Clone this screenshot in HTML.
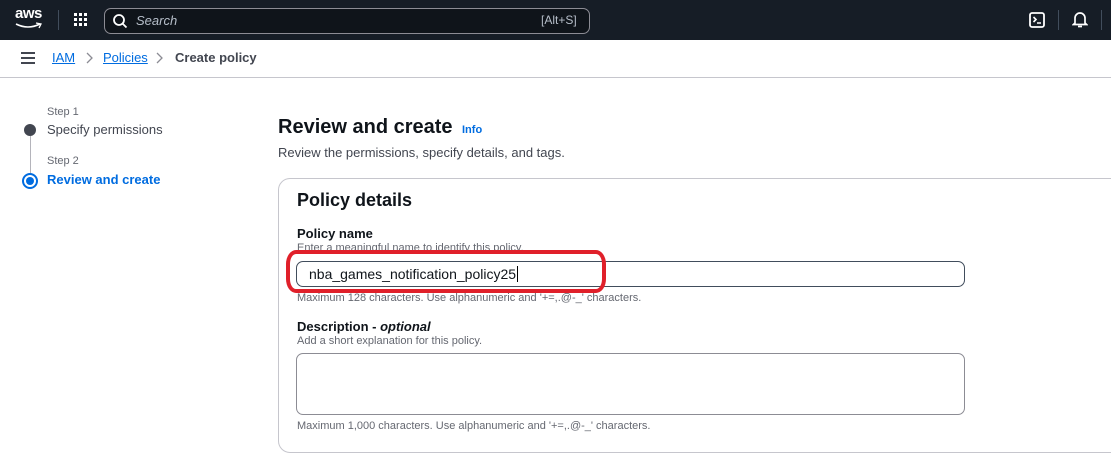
<!DOCTYPE html>
<html><head><style>
*{box-sizing:border-box;margin:0;padding:0}
body{width:1111px;height:463px;overflow:hidden;background:#fff;font-family:"Liberation Sans",sans-serif;position:relative;color:#0f141a}
.a{position:absolute;white-space:nowrap}
</style></head><body>
<div class="a" style="left:0;top:0;width:1111px;height:40px;background:#161d26"></div>
<div class="a" style="left:15px;top:5px;color:#fff;font-size:15px;font-weight:bold;letter-spacing:-0.5px">aws</div>
<svg class="a" style="left:15px;top:22px" width="28" height="8"><path d="M1 2 Q13 8 25 2" stroke="#fff" stroke-width="1.6" fill="none"/><path d="M21 1 L26 2 L24 6" stroke="#fff" stroke-width="1.3" fill="none"/></svg>
<div class="a" style="left:58px;top:10px;width:1px;height:20px;background:#414d5c"></div>
<svg class="a" style="left:74px;top:13px" width="14" height="14" fill="#fff"><rect x="0" y="0" width="3" height="3"/><rect x="5" y="0" width="3" height="3"/><rect x="10" y="0" width="3" height="3"/><rect x="0" y="5" width="3" height="3"/><rect x="5" y="5" width="3" height="3"/><rect x="10" y="5" width="3" height="3"/><rect x="0" y="10" width="3" height="3"/><rect x="5" y="10" width="3" height="3"/><rect x="10" y="10" width="3" height="3"/></svg>
<div class="a" style="left:104px;top:8px;width:486px;height:26px;border:1px solid #8c8c94;border-radius:7px;background:#0f141a"></div>
<svg class="a" style="left:112px;top:13px" width="16" height="16"><circle cx="7" cy="7" r="5" stroke="#fff" stroke-width="1.8" fill="none"/><path d="M10.5 10.5 L14.5 14.5" stroke="#fff" stroke-width="1.8"/></svg>
<div class="a" style="left:136px;top:13px;color:#b6bec9;font-size:13px;font-style:italic">Search</div>
<div class="a" style="left:541px;top:13px;color:#b6bec9;font-size:12px">[Alt+S]</div>
<svg class="a" style="left:1029px;top:12px" width="16" height="16"><rect x="1" y="1" width="14" height="14" rx="2" stroke="#fff" stroke-width="1.8" fill="none"/><path d="M4.5 5 L7 7.5 L4.5 10 M8 11 H12" stroke="#fff" stroke-width="1.6" fill="none"/></svg>
<div class="a" style="left:1058px;top:10px;width:1px;height:20px;background:#414d5c"></div>
<svg class="a" style="left:1072px;top:11px" width="16" height="18"><path d="M3 12 V7 A5 5 0 0 1 13 7 V12 L14.5 13.5 H1.5 Z" stroke="#fff" stroke-width="1.7" fill="none"/><path d="M6 15.5 H10" stroke="#fff" stroke-width="1.7"/></svg>
<div class="a" style="left:1101px;top:10px;width:1px;height:20px;background:#414d5c"></div>

<svg class="a" style="left:21px;top:52px" width="14" height="12"><path d="M0 1H14M0 6H14M0 11H14" stroke="#424650" stroke-width="2"/></svg>
<div class="a" style="left:52px;top:50px;font-size:13px;color:#006ce0;text-decoration:underline">IAM</div>
<svg class="a" style="left:86px;top:52px" width="8" height="12"><path d="M1 1 L6 6 L1 11" stroke="#8c8c94" stroke-width="1.3" fill="none"/></svg>
<div class="a" style="left:103px;top:50px;font-size:13px;color:#006ce0;text-decoration:underline">Policies</div>
<svg class="a" style="left:156px;top:52px" width="8" height="12"><path d="M1 1 L6 6 L1 11" stroke="#8c8c94" stroke-width="1.3" fill="none"/></svg>
<div class="a" style="left:175px;top:50px;font-size:13px;color:#424650;font-weight:bold">Create policy</div>
<div class="a" style="left:0;top:77px;width:1111px;height:1px;background:#c6c6cd"></div>

<div class="a" style="left:47px;top:106px;font-size:11px;color:#656871">Step 1</div>
<div class="a" style="left:24px;top:124px;width:12px;height:12px;border-radius:50%;background:#424650"></div>
<div class="a" style="left:30px;top:136px;width:1px;height:38px;background:#b4b4bb"></div>
<div class="a" style="left:47px;top:122px;font-size:13px;color:#424650">Specify permissions</div>
<div class="a" style="left:47px;top:155px;font-size:11px;color:#656871">Step 2</div>
<div class="a" style="left:22px;top:173px;width:16px;height:16px;border-radius:50%;border:2px solid #006ce0;background:#fff"></div>
<div class="a" style="left:26px;top:177px;width:8px;height:8px;border-radius:50%;background:#006ce0"></div>
<div class="a" style="left:47px;top:172px;font-size:13px;color:#006ce0;font-weight:bold">Review and create</div>

<div class="a" style="left:278px;top:116px;font-size:20px;font-weight:bold;color:#0f141a">Review and create</div>
<div class="a" style="left:462px;top:124px;font-size:11px;font-weight:bold;color:#006ce0">Info</div>
<div class="a" style="left:278px;top:145px;font-size:13px;color:#424650">Review the permissions, specify details, and tags.</div>

<div class="a" style="left:278px;top:178px;width:850px;height:275px;border:1px solid #c6c6cd;border-radius:12px"></div>
<div class="a" style="left:297px;top:190px;font-size:18px;font-weight:bold">Policy details</div>
<div class="a" style="left:297px;top:226px;font-size:13px;font-weight:bold">Policy name</div>
<div class="a" style="left:297px;top:242px;font-size:11px;color:#656871">Enter a meaningful name to identify this policy.</div>
<div class="a" style="left:296px;top:261px;width:669px;height:26px;border:1px solid #414d5c;border-radius:7px"></div>
<div class="a" style="left:309px;top:266px;font-size:14px;color:#0f141a">nba_games_notification_policy25<span style="border-left:1px solid #000;margin-left:1px"></span></div>
<div class="a" style="left:286px;top:250px;width:320px;height:43px;border:4px solid #e0202a;border-radius:10px/14px"></div>
<div class="a" style="left:297px;top:292px;font-size:11px;color:#656871">Maximum 128 characters. Use alphanumeric and '+=,.@-_' characters.</div>
<div class="a" style="left:297px;top:319px;font-size:13px;font-weight:bold">Description - <i>optional</i></div>
<div class="a" style="left:297px;top:335px;font-size:11px;color:#656871">Add a short explanation for this policy.</div>
<div class="a" style="left:296px;top:353px;width:669px;height:62px;border:1px solid #8c8c94;border-radius:7px"></div>
<div class="a" style="left:297px;top:420px;font-size:11px;color:#656871">Maximum 1,000 characters. Use alphanumeric and '+=,.@-_' characters.</div>
</body></html>
